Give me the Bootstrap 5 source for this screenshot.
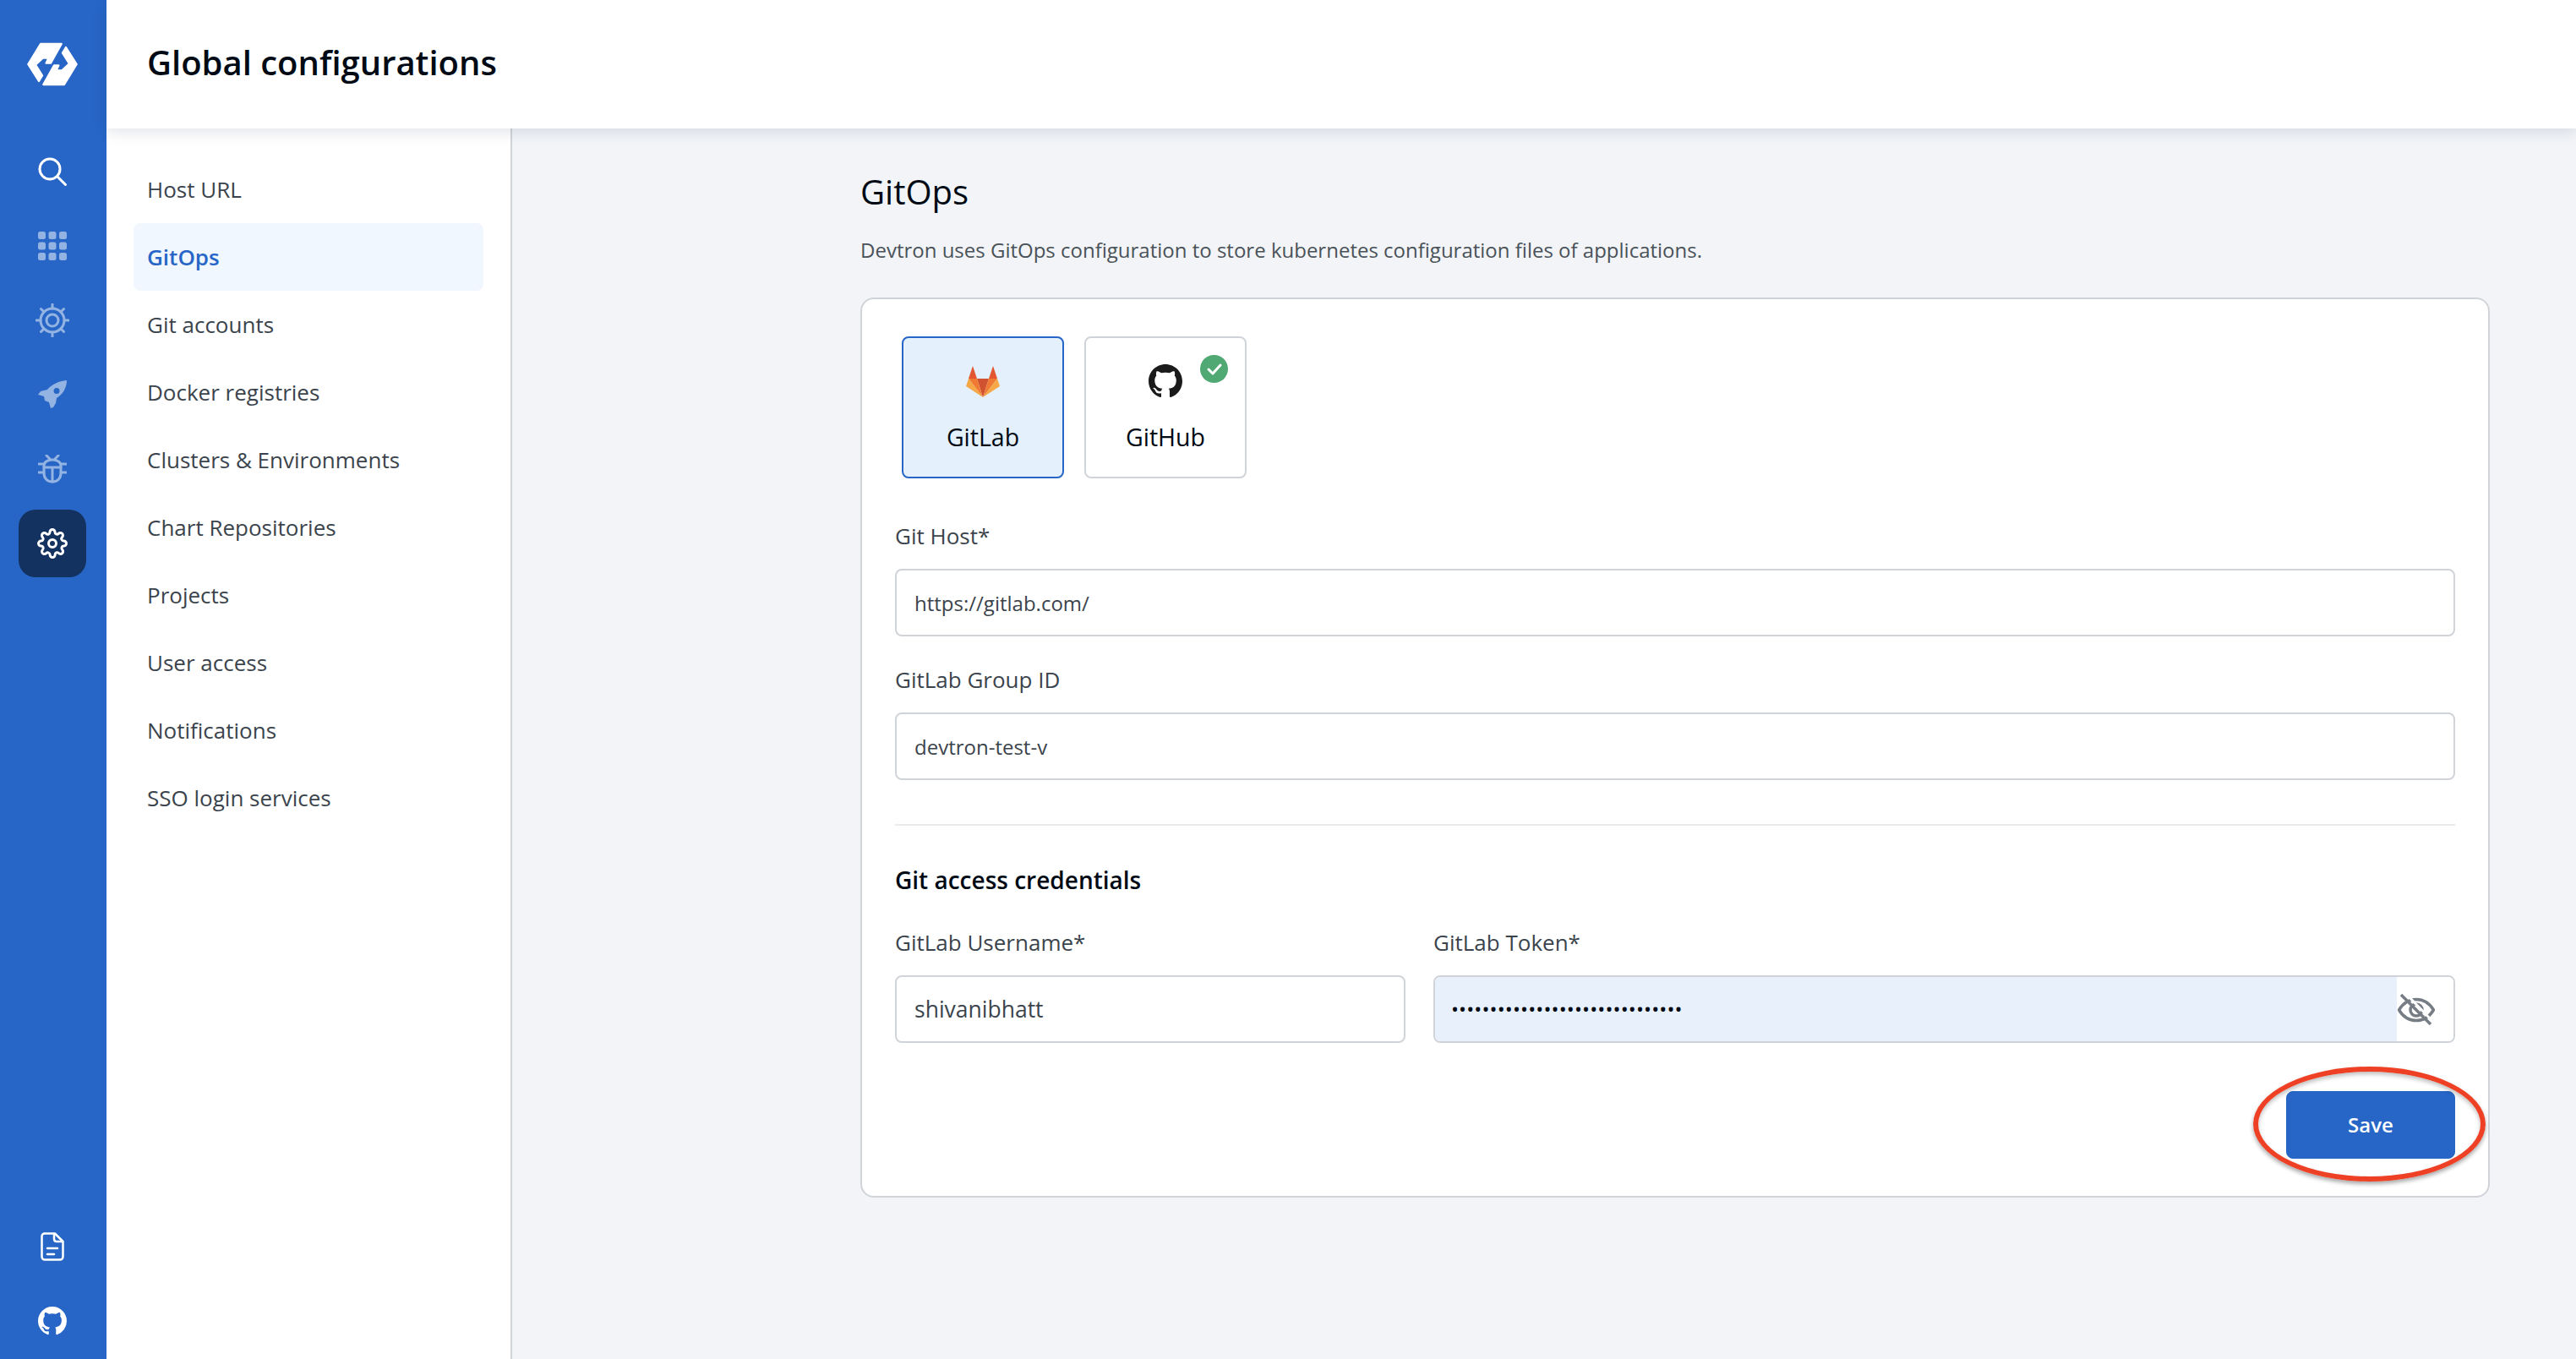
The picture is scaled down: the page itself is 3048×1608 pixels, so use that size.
<!DOCTYPE html>
<html lang="en">
<head>
  <meta charset="UTF-8">
  <title>Global configurations</title>
  <link href="https://cdn.jsdelivr.net/npm/bootstrap@5.3.0/dist/css/bootstrap.min.css" rel="stylesheet" />
  <style>
    body { font-family: "Open Sans", sans-serif; background: #f2f4f7; height: 100vh; overflow: hidden; color: #000a14; }
    .side-rail { width: 126px; background: #2766c6; padding: 40px 2px 28px 0; }
    .rail-logo { height: 72px; margin-bottom: 51px; }
    .rail-item { width: 80px; height: 80px; border-radius: 20px; margin-bottom: 8px; }
    .rail-item.now { background: #14325f; }
    .rail-item svg.dim { opacity: .5; }
    .rail-foot { gap: 54px; }
    .top-head { height: 152px; padding: 0 0 4px 48px; box-shadow: 0 4px 16px rgba(20, 40, 80, .13); z-index: 2; }
    .top-head h1 { font-size: 40px; font-weight: 600; margin: 0; color: #000a14; }
    .cfg-menu { width: 480px; padding: 32px 32px 0; border-right: 2px solid #d0d4d9; }
    .cfg-link { height: 80px; padding-left: 16px; border-radius: 8px; font-size: 26px; color: #3b444c; text-decoration: none; }
    .cfg-link.now { background: #f0f7ff; color: #2766c6; font-weight: 600; }
    .cfg-main { padding: 45px 102px 0 412px; }
    .cfg-main h2 { font-size: 40px; font-weight: 400; line-height: 60px; margin: 0 0 21px; }
    .cfg-sub { font-size: 24px; line-height: 36px; color: #4a5259; margin-bottom: 38px; }
    .cfg-panel { height: 1065px; border: 2px solid #d0d4d9; border-radius: 16px; padding: 44px 39px 0; background: #fff; }
    .git-tile { width: 192px; height: 168px; border: 2px solid #d0d4d9; border-radius: 8px; font-size: 28.500px; line-height: 42px; background: #fff; padding-top: 31px; gap: 25px; }
    .git-tile.now { border-color: #2766c6; background: #e5f0fd; }
    .git-ico { height: 40px; }
    .git-check { top: 20px; right: 20px; width: 33px; height: 33px; }
    .git-tiles { gap: 24px; margin-left: 8px; margin-bottom: 50px; }
    .fld-label { font-size: 26px; line-height: 36px; color: #3b444c; margin-bottom: 21px; display: block; }
    .fld-input { height: 80px; border: 2px solid #d0d4d9; border-radius: 8px; padding: 0 21px; font-size: 24px; color: #3b444c; font-family: "Open Sans", sans-serif; }
    .fld-input.big { font-size: 26.500px; }
    .fld-gap { margin-bottom: 33px; }
    .fld-rule { border-top: 2px solid #e9ebee; margin: 52px 0 44px; }
    .fld-head { font-size: 28px; font-weight: 600; line-height: 40px; margin-bottom: 36px; }
    .fld-pair { gap: 33px; }
    .fld-user { width: 604px; flex-shrink: 0; }
    .fld-token { height: 80px; border: 2px solid #d0d4d9; border-radius: 8px; overflow: hidden; }
    .fld-token input { border: 0; outline: 0; background: #e8f0fc; padding: 0 19px; font-size: 24px; color: #000a14; letter-spacing: .1px; }
    .fld-eye { width: 67px; padding-right: 21px; background: #fff; }
    .save-btn { width: 200px; height: 80px; border-radius: 8px; background: #2766c6; border-color: #2766c6; font-size: 24px; font-weight: 600; margin-top: 57px; }
    .save-ring { left: 2666px; top: 1262px; width: 275px; height: 136px; border: 6px solid #ee4025; border-radius: 50%; box-shadow: 0 3px 5px rgba(0, 0, 0, .35), inset 0 3px 5px rgba(0, 0, 0, .25); pointer-events: none; z-index: 5; }
  </style>
</head>
<body>
  <div class="d-flex h-100">

    <!-- Left rail -->
    <div class="side-rail d-flex flex-column align-items-center flex-shrink-0">
      <div class="rail-logo">
        <svg width="80" height="72" viewBox="0 0 240 216" fill="#fff" stroke="#fff" stroke-width="7" stroke-linejoin="round">
          <path d="M34 108L78 36H152L114 104H98L106 86H86L60 110L84 148L72 168z"/>
          <path d="M206 108L162 180H88L126 112H142L134 130H154L180 106L156 68L168 48z"/>
        </svg>
      </div>
      <div class="rail-item d-flex align-items-center justify-content-center">
        <svg width="34" height="34" viewBox="0 0 34 34" fill="none" stroke="#fff" stroke-width="3" stroke-linecap="round"><circle cx="14" cy="14" r="12"/><path d="M23 23l9.500 9.500"/></svg>
      </div>
      <div class="rail-item d-flex align-items-center justify-content-center">
        <svg class="dim" width="34" height="34" viewBox="0 0 34 34" fill="#fff"><rect x="0" y="0" width="9" height="9" rx="2.500"/><rect x="12.500" y="0" width="9" height="9" rx="2.500"/><rect x="25" y="0" width="9" height="9" rx="2.500"/><rect x="0" y="12.500" width="9" height="9" rx="2.500"/><rect x="12.500" y="12.500" width="9" height="9" rx="2.500"/><rect x="25" y="12.500" width="9" height="9" rx="2.500"/><rect x="0" y="25" width="9" height="9" rx="2.500"/><rect x="12.500" y="25" width="9" height="9" rx="2.500"/><rect x="25" y="25" width="9" height="9" rx="2.500"/></svg>
      </div>
      <div class="rail-item d-flex align-items-center justify-content-center">
        <svg class="dim" width="40" height="40" viewBox="0 0 40 40" fill="none" stroke="#fff" stroke-width="3" stroke-linecap="round"><circle cx="20" cy="20" r="14"/><circle cx="20" cy="20" r="7"/><path d="M20 1v5M20 34v5M1 20h5M34 20h5M6.500 6.500l3.500 3.500M30 30l3.500 3.500M33.500 6.500L30 10M10 30l-3.500 3.500"/></svg>
      </div>
      <div class="rail-item d-flex align-items-center justify-content-center">
        <svg class="dim" width="34" height="34" viewBox="0 0 34 34" fill="#fff"><path fill-rule="evenodd" d="M34 0C24 1 16 5 11 11L3 13 0 17l7 2 1 5 5 2 2 7 3-1 3-5 1-6C29 17 34 9 34 0zM22 9a3.500 3.500 0 1 1 0 7 3.500 3.500 0 0 1 0-7z"/></svg>
      </div>
      <div class="rail-item d-flex align-items-center justify-content-center">
        <svg class="dim" width="34" height="34" viewBox="0 0 34 34" fill="none" stroke="#fff" stroke-width="3" stroke-linecap="round"><path d="M7 13c0-4 4-7 10-7s10 3 10 7v9c0 6-4 10-10 10S7 28 7 22z"/><path d="M7 15h20M17 15v17M1 11h6M33 11h-6M1 21h6M33 21h-6M10 1l4 4M24 1l-4 4"/></svg>
      </div>
      <div class="rail-item now d-flex align-items-center justify-content-center">
        <svg width="36" height="36" viewBox="0 0 24 24" fill="none" stroke="#fff" stroke-width="2" stroke-linecap="round" stroke-linejoin="round"><circle cx="12" cy="12" r="3"/><path d="M19.400 15a1.650 1.650 0 0 0 .33 1.820l.06.06a2 2 0 1 1-2.830 2.830l-.06-.06a1.650 1.650 0 0 0-1.820-.33 1.650 1.650 0 0 0-1 1.510V21a2 2 0 0 1-4 0v-.09A1.650 1.650 0 0 0 9 19.400a1.650 1.650 0 0 0-1.820.33l-.06.06a2 2 0 1 1-2.830-2.830l.06-.06a1.650 1.650 0 0 0 .33-1.820 1.650 1.650 0 0 0-1.510-1H3a2 2 0 0 1 0-4h.09A1.650 1.650 0 0 0 4.600 9a1.650 1.650 0 0 0-.33-1.820l-.06-.06a2 2 0 1 1 2.830-2.830l.06.06a1.650 1.650 0 0 0 1.820.33H9a1.650 1.650 0 0 0 1-1.510V3a2 2 0 0 1 4 0v.09a1.650 1.650 0 0 0 1 1.510 1.650 1.650 0 0 0 1.820-.33l.06-.06a2 2 0 1 1 2.830 2.830l-.06.06a1.650 1.650 0 0 0-.33 1.820V9a1.650 1.650 0 0 0 1.510 1H21a2 2 0 0 1 0 4h-.09a1.650 1.650 0 0 0-1.510 1z"/></svg>
      </div>
      <div class="rail-foot mt-auto d-flex flex-column align-items-center">
        <svg width="28" height="34" viewBox="0 0 28 34" fill="none" stroke="#fff" stroke-width="2.500" stroke-linecap="round" stroke-linejoin="round"><path d="M4 1.500h13L26.500 11v18c0 2-1.500 3.500-3.500 3.500H5C3 32.500 1.500 31 1.500 29V5C1.500 3 3 1.500 5 1.500z"/><path d="M16 2v6c0 2 1.500 3 3 3h7M8 19h12M8 26h8"/></svg>
        <svg width="34" height="34" viewBox="0 0 16 16" fill="#fff"><path d="M8 0C3.580 0 0 3.580 0 8c0 3.540 2.290 6.530 5.470 7.590.4.070.55-.17.55-.38 0-.19-.01-.82-.01-1.490-2.010.37-2.530-.49-2.690-.94-.09-.23-.48-.94-.82-1.130-.28-.15-.68-.52-.01-.53.63-.01 1.080.58 1.230.82.72 1.210 1.870.87 2.330.66.07-.52.28-.87.51-1.070-1.780-.2-3.640-.89-3.640-3.950 0-.87.31-1.590.82-2.150-.08-.2-.36-1.020.08-2.120 0 0 .67-.21 2.200.82.64-.18 1.320-.27 2-.27.68 0 1.360.09 2 .27 1.530-1.040 2.200-.82 2.200-.82.44 1.100.16 1.920.08 2.120.51.56.82 1.270.82 2.150 0 3.070-1.870 3.750-3.650 3.950.29.25.54.73.54 1.480 0 1.070-.01 1.930-.01 2.200 0 .21.15.46.55.38A8.013 8.013 0 0 0 16 8c0-4.420-3.580-8-8-8z"/></svg>
      </div>
    </div>

    <div class="d-flex flex-column flex-grow-1">
      <!-- Page title -->
      <div class="top-head bg-white d-flex align-items-center flex-shrink-0">
        <h1>Global configurations</h1>
      </div>

      <div class="d-flex flex-grow-1">
        <!-- Settings menu -->
        <nav class="cfg-menu bg-white d-flex flex-column flex-shrink-0">
          <a class="cfg-link d-flex align-items-center" href="#">Host URL</a>
          <a class="cfg-link now d-flex align-items-center" href="#">GitOps</a>
          <a class="cfg-link d-flex align-items-center" href="#">Git accounts</a>
          <a class="cfg-link d-flex align-items-center" href="#">Docker registries</a>
          <a class="cfg-link d-flex align-items-center" href="#">Clusters &amp; Environments</a>
          <a class="cfg-link d-flex align-items-center" href="#">Chart Repositories</a>
          <a class="cfg-link d-flex align-items-center" href="#">Projects</a>
          <a class="cfg-link d-flex align-items-center" href="#">User access</a>
          <a class="cfg-link d-flex align-items-center" href="#">Notifications</a>
          <a class="cfg-link d-flex align-items-center" href="#">SSO login services</a>
        </nav>

        <!-- GitOps form -->
        <main class="cfg-main flex-grow-1">
          <h2>GitOps</h2>
          <div class="cfg-sub">Devtron uses GitOps configuration to store kubernetes configuration files of applications.</div>
          <div class="cfg-panel d-flex flex-column">
            <div class="git-tiles d-flex">
              <div class="git-tile now d-flex flex-column align-items-center">
                <div class="git-ico d-flex align-items-center">
                  <svg width="40" height="37" viewBox="0 0 40 37">
                    <path fill="#e2572f" d="M8 0l5 15H3zM32 0l5 15H27z"/>
                    <path fill="#d1522e" d="M13 15h14l-7 22z"/>
                    <path fill="#f07a33" d="M3 15h10l7 22zM37 15H27l-7 22z"/>
                    <path fill="#f5a845" d="M3 15L0 24l20 13zM37 15l3 9-20 13z"/>
                  </svg>
                </div>
                <span>GitLab</span>
              </div>
              <div class="git-tile position-relative d-flex flex-column align-items-center">
                <div class="git-ico d-flex align-items-center">
                  <svg width="40" height="40" viewBox="0 0 16 16" fill="#1b1b1b"><path d="M8 0C3.580 0 0 3.580 0 8c0 3.540 2.290 6.530 5.470 7.590.4.070.55-.17.55-.38 0-.19-.01-.82-.01-1.490-2.010.37-2.530-.49-2.690-.94-.09-.23-.48-.94-.82-1.130-.28-.15-.68-.52-.01-.53.63-.01 1.080.58 1.230.82.72 1.210 1.870.87 2.330.66.07-.52.28-.87.51-1.070-1.780-.2-3.640-.89-3.640-3.950 0-.87.31-1.590.82-2.150-.08-.2-.36-1.020.08-2.120 0 0 .67-.21 2.200.82.64-.18 1.320-.27 2-.27.68 0 1.360.09 2 .27 1.530-1.040 2.200-.82 2.200-.82.44 1.100.16 1.920.08 2.120.51.56.82 1.270.82 2.150 0 3.070-1.870 3.750-3.650 3.950.29.25.54.73.54 1.480 0 1.070-.01 1.930-.01 2.200 0 .21.15.46.55.38A8.013 8.013 0 0 0 16 8c0-4.420-3.580-8-8-8z"/></svg>
                </div>
                <span>GitHub</span>
                <svg class="git-check position-absolute" viewBox="0 0 33 33"><circle cx="16.500" cy="16.500" r="16.500" fill="#50a873"/><path d="M10 17l5 5 9-10" fill="none" stroke="#fff" stroke-width="3" stroke-linecap="round" stroke-linejoin="round"/></svg>
              </div>
            </div>

            <div class="fld-gap">
              <label class="fld-label">Git Host*</label>
              <input class="fld-input w-100" type="text" value="https://gitlab.com/">
            </div>
            <div>
              <label class="fld-label">GitLab Group ID</label>
              <input class="fld-input w-100" type="text" value="devtron-test-v">
            </div>

            <div class="fld-rule"></div>
            <div class="fld-head">Git access credentials</div>

            <div class="fld-pair d-flex">
              <div class="fld-user">
                <label class="fld-label">GitLab Username*</label>
                <input class="fld-input big w-100" type="text" value="shivanibhatt">
              </div>
              <div class="flex-grow-1">
                <label class="fld-label">GitLab Token*</label>
                <div class="fld-token d-flex">
                  <input class="flex-grow-1 w-100" type="password" value="abcdefghijklmnopqrstuvwxyz1234">
                  <div class="fld-eye d-flex align-items-center justify-content-center flex-shrink-0">
                    <svg class="flex-shrink-0" width="44" height="37" viewBox="0 0 44 37" fill="none" stroke="#767d84" stroke-width="3.500" stroke-linejoin="round"><path d="M1.500 19C7 10 14 6.500 22 6.500S37 10 42.500 19C37 28 30 31.500 22 31.500S7 28 1.500 19z"/><circle cx="22" cy="19" r="7"/><path d="M5 0l35 36" stroke="#fff" stroke-width="3" transform="translate(3 -2)"/><path d="M4 1l35 35" stroke-width="3.500"/></svg>
                  </div>
                </div>
              </div>
            </div>

            <div class="d-flex justify-content-end">
              <button class="btn btn-primary save-btn" type="button">Save</button>
            </div>
          </div>
        </main>
      </div>
    </div>
  </div>

  <!-- Hand-drawn highlight over the Save button -->
  <div class="save-ring position-absolute"></div>

  <script src="https://cdn.jsdelivr.net/npm/bootstrap@5.3.0/dist/js/bootstrap.bundle.min.js"></script>
</body>
</html>
